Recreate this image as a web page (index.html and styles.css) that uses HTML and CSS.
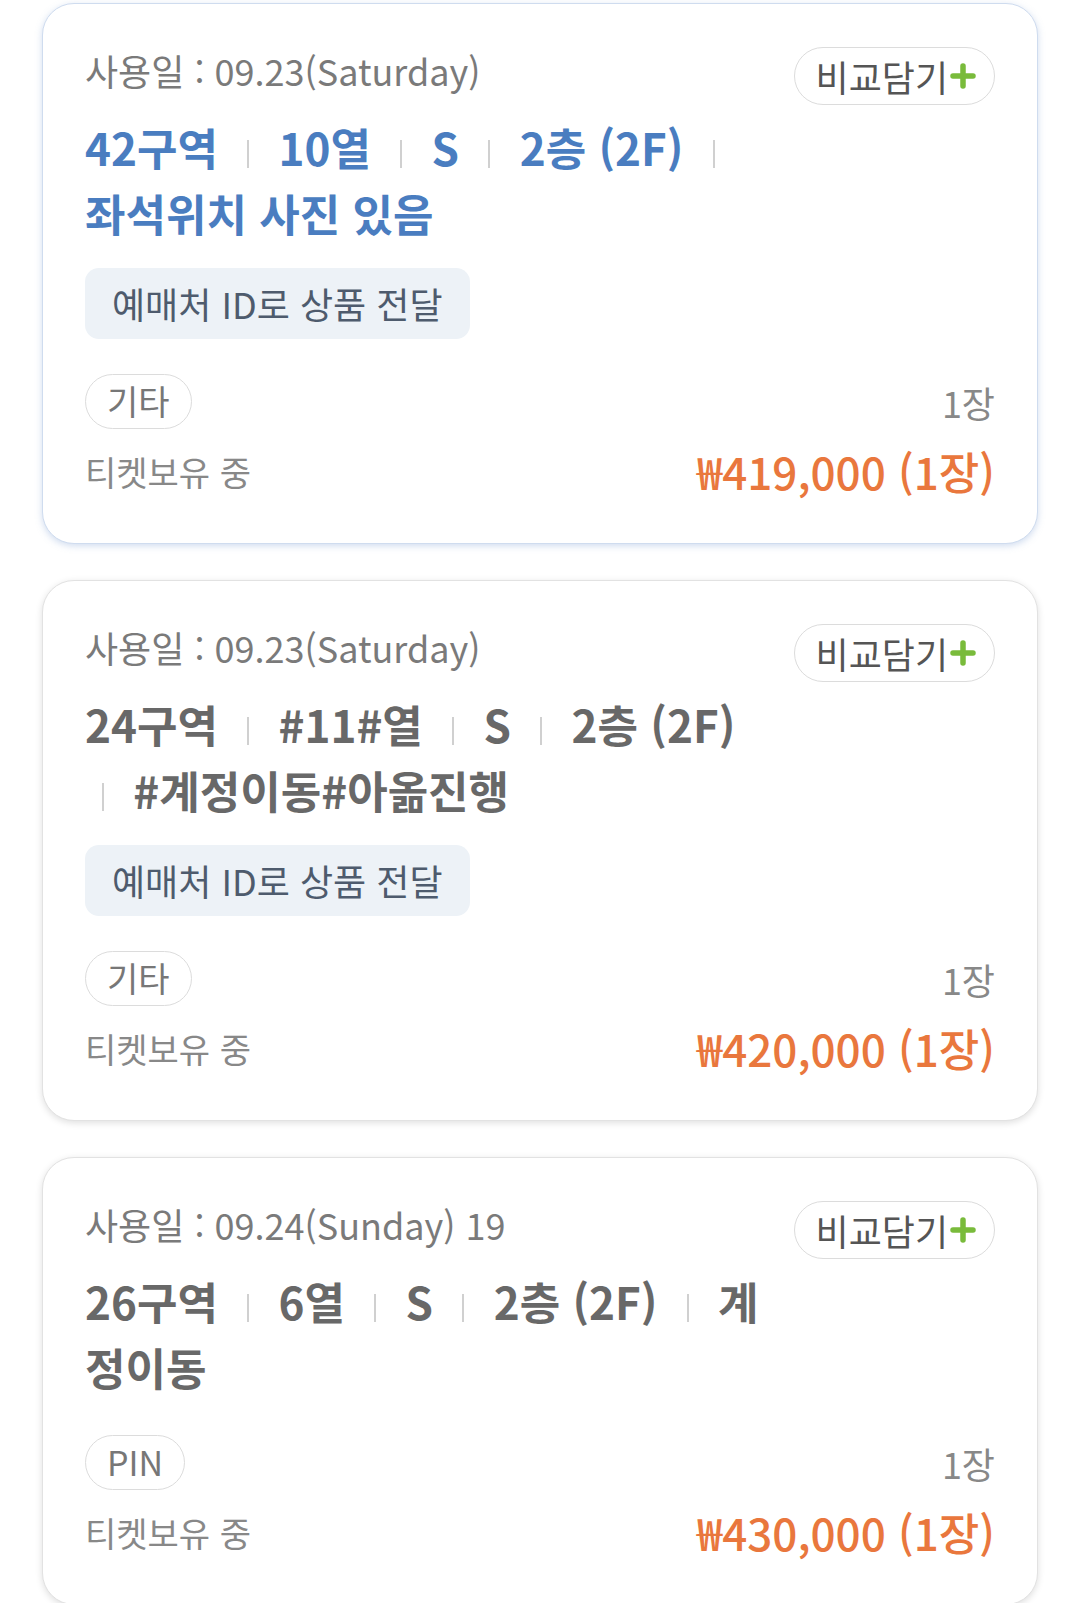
FILE: index.html
```html
<!DOCTYPE html>
<html lang="ko">
<head>
  <meta charset="UTF-8" />
  <meta name="viewport" content="width=device-width, initial-scale=1.0" />
  <title>티켓 목록</title>
  <link rel="stylesheet" href="styles.css">
</head>

<body>
  <div class="list">

    <!-- 선택된 카드 -->
    <div class="card card-active">
      <div class="card-top">
        <div class="date">사용일 : 09.23(Saturday)</div>
        <button class="compare">비교담기<svg class="plus" viewBox="0 0 28 28"><path d="M14 4v20M4 14h20" /></svg></button>
      </div>
      <div class="seat seat-blue">42구역 <span class="bar"></span> 10열 <span class="bar"></span> S <span class="bar"></span> 2층 (2F) <span class="bar"></span> 좌석위치 사진 있음</div>
      <div class="delivery">예매처 ID로 상품 전달</div>
      <div class="row row-tag">
        <span class="tag">기타</span>
        <span class="qty">1장</span>
      </div>
      <div class="row">
        <span class="status">티켓보유 중</span>
        <span class="price">₩419,000 (1장)</span>
      </div>
    </div>

    <div class="card">
      <div class="card-top">
        <div class="date">사용일 : 09.23(Saturday)</div>
        <button class="compare">비교담기<svg class="plus" viewBox="0 0 28 28"><path d="M14 4v20M4 14h20" /></svg></button>
      </div>
      <div class="seat">24구역 <span class="bar"></span> #11#열 <span class="bar"></span> S <span class="bar"></span> 2층 (2F) <span class="bar"></span> #계정이동#아옮진행</div>
      <div class="delivery">예매처 ID로 상품 전달</div>
      <div class="row row-tag">
        <span class="tag">기타</span>
        <span class="qty">1장</span>
      </div>
      <div class="row">
        <span class="status">티켓보유 중</span>
        <span class="price">₩420,000 (1장)</span>
      </div>
    </div>

    <div class="card">
      <div class="card-top">
        <div class="date">사용일 : 09.24(Sunday) 19</div>
        <button class="compare">비교담기<svg class="plus" viewBox="0 0 28 28"><path d="M14 4v20M4 14h20" /></svg></button>
      </div>
      <div class="seat">26구역 <span class="bar"></span> 6열 <span class="bar"></span> S <span class="bar"></span> 2층 (2F) <span class="bar"></span> 계정이동</div>
      <div class="row row-tag">
        <span class="tag">PIN</span>
        <span class="qty">1장</span>
      </div>
      <div class="row">
        <span class="status">티켓보유 중</span>
        <span class="price">₩430,000 (1장)</span>
      </div>
    </div>

  </div>
</body>
</html>
```

FILE: styles.css
```css
body {
  font-family: "Noto Sans CJK KR", "Noto Sans", sans-serif;
  background-color: #ffffff;
  margin: 0;
  overflow: hidden;
}
.list {
  padding: 3px 0 0 42px;
}
.card {
  width: 996px;
  box-sizing: border-box;
  padding: 43px 42px 44px 42px;
  margin-bottom: 36px;
  background-color: #ffffff;
  border: 1px solid #e2e2e2;
  border-radius: 32px;
  box-shadow: 0 2px 7px rgba(0, 0, 0, 0.13);
}
.card-active {
  border-color: #cfdcef;
  box-shadow: 0 2px 7px rgba(120, 155, 210, 0.35);
}
.card-top {
  display: flex;
  justify-content: space-between;
  align-items: flex-start;
}
.date {
  font-size: 36px;
  line-height: 46px;
  color: #7a7a7a;
}
.compare {
  display: flex;
  align-items: center;
  height: 58px;
  padding: 0 17px 0 21px;
  background: #ffffff;
  border: 1.5px solid #dcdcdc;
  border-radius: 30px;
  font-family: inherit;
  font-size: 36px;
  color: #555555;
}
.plus {
  width: 28px;
  height: 28px;
  margin-left: 1px;
}
.plus path {
  stroke: #79bb3b;
  stroke-width: 5.5;
  stroke-linecap: round;
  fill: none;
}
.seat {
  width: 75%;
  margin-top: 9px;
  font-size: 44px;
  font-weight: 700;
  line-height: 66px;
  color: #686868;
}
.seat-blue {
  color: #4a7dc0;
}
.bar {
  display: inline-block;
  width: 2px;
  height: 28px;
  margin: 0 17px;
  background-color: #d0d0d0;
  vertical-align: -2px;
}
.delivery {
  display: inline-block;
  margin-top: 22px;
  padding: 0 27px;
  height: 71px;
  line-height: 71px;
  background-color: #edf2f7;
  border-radius: 14px;
  font-size: 36px;
  color: #4e5b6d;
}
.row {
  display: flex;
  justify-content: space-between;
  align-items: center;
  margin-top: 14px;
}
.row-tag {
  margin-top: 35px;
}
.tag {
  display: inline-block;
  height: 55px;
  line-height: 52px;
  box-sizing: border-box;
  padding: 0 21px;
  border: 1.5px solid #dcdcdc;
  border-radius: 28px;
  font-size: 34px;
  color: #777777;
}
.qty {
  font-size: 36px;
  color: #888888;
}
.status {
  font-size: 34px;
  color: #888888;
}
.price {
  font-size: 44px;
  font-weight: 500;
  line-height: 56px;
  color: #e9773d;
}
```
